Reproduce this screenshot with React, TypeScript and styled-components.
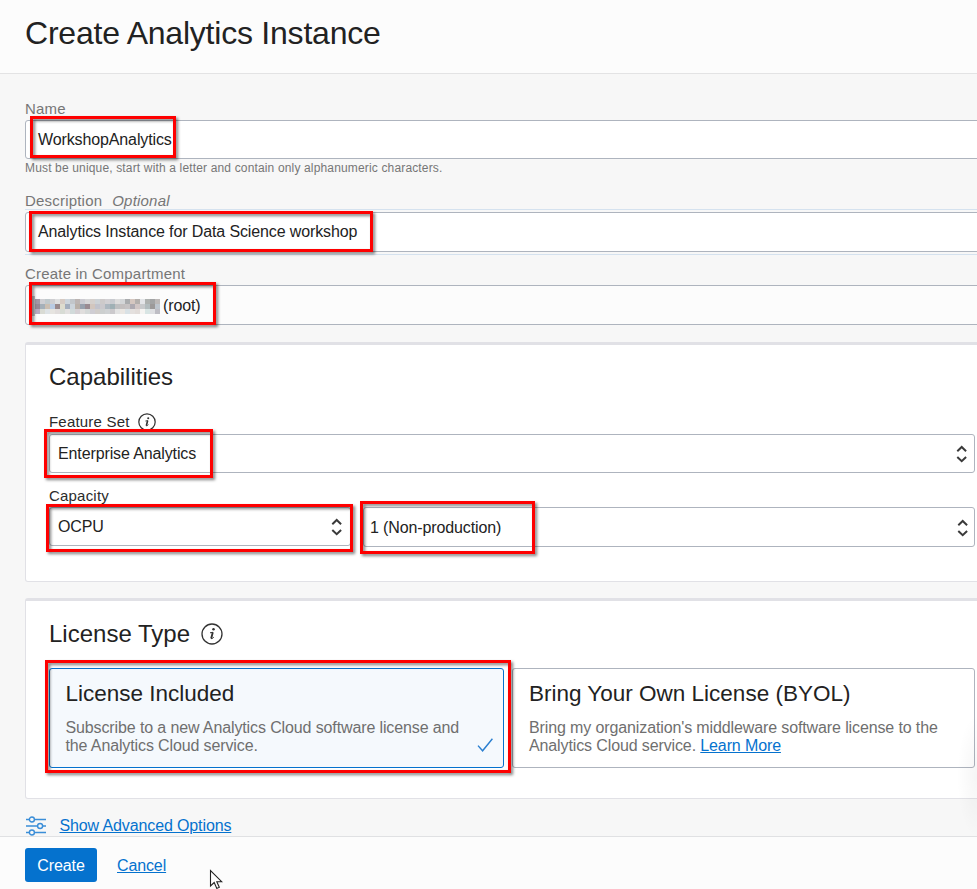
import React from "react";
import styled, { createGlobalStyle, css } from "styled-components";

const GlobalStyle = createGlobalStyle`
  *, *::before, *::after { box-sizing: border-box; }
  html, body { margin: 0; padding: 0; overflow: hidden; }
  body { font-family: "Liberation Sans", Arial, sans-serif; color: #222; }
`;

const Page = styled.div`
  position: relative;
  display: flex;
  flex-direction: column;
  width: 977px;
  height: 889px;
  overflow: hidden;
  background: #f7f7f7;
`;

const Header = styled.header`
  flex: none;
  height: 74px;
  padding: 13px 25px 0;
  background: #fcfcfc;
  border-bottom: 1px solid #e3e3e4;
`;

const Title = styled.h1`
  margin: 0;
  font-size: 32px;
  font-weight: 400;
  line-height: 40px;
  letter-spacing: -0.22px;
  white-space: nowrap;
`;

const Main = styled.main`
  flex: 1;
  min-height: 0;
  display: flex;
  flex-direction: column;
  padding: 24px 0 0 25px;
  overflow: hidden;
`;

const Field = styled.div<{ $gap?: number }>`
  flex: none;
  margin-bottom: ${(p) => p.$gap ?? 0}px;
`;

const Label = styled.div<{ $dark?: boolean; $height?: number; $nudge?: number }>`
  display: flex;
  align-items: center;
  height: ${(p) => p.$height ?? 22}px;
  padding-top: ${(p) => Math.max(p.$nudge ?? 0, 0)}px;
  padding-bottom: ${(p) => Math.max(-(p.$nudge ?? 0), 0)}px;
  font-size: 15px;
  line-height: 22px;
  letter-spacing: 0.2px;
  white-space: nowrap;
  color: ${(p) => (p.$dark ? "#2b2b2b" : "#767676")};
`;

const Optional = styled.em`
  margin-left: 10px;
`;

const TextBox = styled.div<{ $height: number; $muted?: boolean }>`
  position: relative;
  display: flex;
  align-items: center;
  width: 980px;
  height: ${(p) => p.$height}px;
  padding-left: 12px;
  border: 1px solid #aeb4be;
  border-radius: 3px;
  background: ${(p) => (p.$muted ? "#fcfcfc" : "#fff")};
`;

const FocusHalo = styled.div`
  width: 980px;
  padding: 2px 0;
  border: solid #d5e2ef;
  border-width: 1px 0;
`;

const Value = styled.span<{ $top?: number }>`
  padding-top: ${(p) => p.$top ?? 0}px;
  font-size: 16px;
  line-height: 20px;
  letter-spacing: -0.12px;
  white-space: nowrap;
`;

const Hint = styled.div`
  height: 18px;
  font-size: 12px;
  line-height: 18px;
  letter-spacing: 0.155px;
  white-space: nowrap;
  color: #767676;
`;

const Highlight = styled.div<{ $x: number; $y: number; $w: number; $h: number }>`
  position: absolute;
  z-index: 2;
  left: ${(p) => p.$x}px;
  top: ${(p) => p.$y}px;
  width: ${(p) => p.$w}px;
  height: ${(p) => p.$h}px;
  border: 3px solid #fe0000;
  filter: drop-shadow(2px 2px 1.5px rgba(0, 0, 0, 0.5));
  pointer-events: none;
`;

const Mosaic = styled.svg`
  flex: none;
  margin-left: -6px;
  margin-right: 3px;
`;

const Card = styled.section<{ $height: number }>`
  flex: none;
  width: 980px;
  height: ${(p) => p.$height}px;
  padding-left: 23px;
  background: #fff;
  border: 1px solid #e1e1e6;
  border-top-width: 3px;
  border-radius: 3px;
  margin-bottom: 16px;
`;

const CardTitle = styled.h2<{ $top: number; $bottom: number }>`
  display: flex;
  align-items: center;
  gap: 11px;
  margin: ${(p) => p.$top}px 0 ${(p) => p.$bottom}px;
  height: 30px;
  font-size: 24px;
  font-weight: 400;
  line-height: 30px;
  white-space: nowrap;
`;

const Select = styled.div<{
  $width: number;
  $height: number;
  $left: number;
  $right: number;
  $top?: number;
}>`
  position: relative;
  flex: none;
  display: flex;
  align-items: center;
  justify-content: space-between;
  width: ${(p) => p.$width}px;
  height: ${(p) => p.$height}px;
  padding: ${(p) => p.$top ?? 0}px ${(p) => p.$right}px 0 ${(p) => p.$left}px;
  border: 1px solid #aeb4be;
  border-radius: 3px;
  background: #fff;
`;

const CapacityRow = styled.div`
  display: flex;
  align-items: flex-start;
  gap: 12px;
`;

const OptionRow = styled.div`
  display: flex;
  gap: 8px;
`;

const Option = styled.div<{ $width: number; $selected?: boolean }>`
  position: relative;
  flex: none;
  width: ${(p) => p.$width}px;
  height: 100px;
  padding: 11px 0 0 16px;
  border: 1px solid #aeb4be;
  border-radius: 3px;
  background: #fff;
  ${(p) =>
    p.$selected &&
    css`
      padding-left: 15.5px;
      border-color: #0572ce;
      background: #f5f9fd;
    `}
`;

const OptionTitle = styled.div`
  height: 28px;
  font-size: 22.5px;
  line-height: 28px;
  white-space: nowrap;
`;

const OptionBody = styled.div`
  margin-top: 11px;
`;

const OptionText = styled.div`
  height: 18px;
  font-size: 16px;
  line-height: 18px;
  letter-spacing: -0.12px;
  white-space: nowrap;
  color: #6f6f6f;
`;

const CheckSlot = styled.div`
  position: absolute;
  right: 9px;
  bottom: 14px;
  display: flex;
`;

const Link = styled.a`
  font-size: 16px;
  line-height: inherit;
  letter-spacing: -0.12px;
  color: #0572ce;
  text-decoration: underline;
  white-space: nowrap;
`;

const AdvancedRow = styled.div`
  flex: none;
  display: flex;
  align-items: flex-start;
  gap: 13.5px;
  height: 21px;
  padding-top: 1px;
  line-height: 20px;
`;

const Footer = styled.footer`
  flex: none;
  display: flex;
  align-items: flex-start;
  gap: 20px;
  height: 53px;
  padding: 11px 25px 0;
  background: #fcfcfc;
  border-top: 1px solid #e0e1e3;
`;

const CreateButton = styled.button`
  width: 72px;
  height: 34px;
  padding: 1px 0 0;
  border: 0;
  border-radius: 3px;
  background: #0572ce;
  color: #fff;
  font: 16px/33px "Liberation Sans", Arial, sans-serif;
  letter-spacing: -0.1px;
`;

const CancelSlot = styled.div`
  display: flex;
  align-items: center;
  height: 34px;
  padding-top: 2px;
  line-height: 20px;
`;

const Cursor = styled.svg`
  position: absolute;
  left: 209px;
  top: 869px;
`;

const EdgeShade = styled.div`
  position: absolute;
  right: 0;
  top: 716px;
  width: 20px;
  height: 120px;
  background: radial-gradient(ellipse 20px 62px at 100% 50%, rgba(0, 0, 0, 0.04), rgba(0, 0, 0, 0));
`;

const InfoIcon = ({ size }: { size: number }) => (
  <svg width={size} height={size} viewBox="0 0 22 22" fill="none">
    <circle cx="11" cy="11" r="10" stroke="#333" strokeWidth={size > 20 ? 1.3 : 1.5} />
    <circle cx="12.5" cy="6.3" r="1.25" fill="#333" />
    <path d="M9 9.8 L12 9.3" stroke="#333" strokeWidth="1" />
    <path d="M11.8 9.2 L10.2 15.6" stroke="#333" strokeWidth="1.9" />
    <path d="M10 15.7 Q11.4 15.9 12.8 14.2" stroke="#333" strokeWidth="1" />
  </svg>
);

const Chevrons = () => (
  <svg width="12" height="18" viewBox="0 0 12 18" fill="none" stroke="#3a3a3a" strokeWidth="2">
    <path d="M1.3 6.2 L5.7 2 L10.1 6.2" />
    <path d="M1.3 12 L5.7 16.2 L10.1 12" />
  </svg>
);

const CheckIcon = () => (
  <svg width="17" height="15" viewBox="0 0 17 15" fill="none" stroke="#2a7fd0" strokeWidth="1.4">
    <path d="M1 7.6 L5.6 12.8 L15.4 0.8" />
  </svg>
);

const SlidersIcon = () => (
  <svg width="21" height="20" viewBox="0 0 21 20" fill="none" stroke="#3b8ed8" strokeWidth="1.4">
    <path d="M1 3.5h3.2M9.6 3.5H21M1 10h11.4M17.8 10H21M1 16.5h3.2M9.6 16.5H21" />
    <circle cx="6.9" cy="3.5" r="2.5" />
    <circle cx="15.1" cy="10" r="2.5" />
    <circle cx="6.9" cy="16.5" r="2.5" />
  </svg>
);

const mosaicRows = [
  ["#a397a5", "#cfcfd3", "#c0c9cc", "#cfcfd2", "#dedfe0", "#d6cbc4", "#cdd5dc", "#c2c6ca", "#bcb5b3", "#cccbd1", "#d6d6d7", "#d5d0cd", "#cdd2d6", "#cdcaca", "#d2d0d3", "#c9cbd0", "#dcdcdc", "#d3d5d7", "#aaacae", "#d5c7c0", "#b4b0ad", "#e3e5e8", "#aeb2b0", "#a3a4a5", "#bdb9b8"],
  ["#978895", "#a5b0b9", "#cbbfb2", "#b9cbe3", "#99898c", "#dedcce", "#a4aebd", "#ccd4db", "#b9b0a8", "#98a1ad", "#9a8b91", "#d2c6be", "#c2c3cc", "#cac8cc", "#adb7bf", "#9fb0b5", "#bebfc1", "#c3bfbf", "#c6c2c3", "#aeaab1", "#d1c6c5", "#c8cacc", "#b2bcbe", "#9c9999", "#bec5cd"],
  ["#b9abc1", "#d9dbd4", "#dee3e6", "#e6e4e0", "#e1dddc", "#d8dcd5", "#e3e1e0", "#d1dada", "#d5d0d4", "#e0dedd", "#d5d9d8", "#cfcdd3", "#d1cdca", "#cccfcf", "#cfd2d4", "#cbc9cc", "#e3e3e3", "#eae6e2", "#d9e1e5", "#e4e0de", "#e2dcd9", "#f5f4f2", "#d8e5e4", "#dedfe2", "#bebdc4"],
];

const RedactedName = () => (
  <Mosaic width="128" height="24" viewBox="0 0 128 24" shapeRendering="crispEdges">
    <rect x="0" y="3" width="3" height="20" fill="#c3c1c2" />
    {mosaicRows.map((row, y) =>
      row.map((fill, x) => (
        <rect key={`${x}-${y}`} x={3 + x * 5} y={6 + y * 5} width="5" height="5" fill={fill} />
      ))
    )}
  </Mosaic>
);

export default function App() {
  return (
    <>
      <GlobalStyle />
      <Page>
        <Header>
          <Title>Create Analytics Instance</Title>
        </Header>
        <Main>
          <Field $gap={13}>
            <Label>Name</Label>
            <TextBox $height={39}>
              <Value>WorkshopAnalytics</Value>
              <Highlight $x={4} $y={-5} $w={146} $h={42} />
            </TextBox>
            <Hint>Must be unique, start with a letter and contain only alphanumeric characters.</Hint>
          </Field>
          <Field $gap={8}>
            <Label $height={19} $nudge={2}>
              Description <Optional>Optional</Optional>
            </Label>
            <FocusHalo>
              <TextBox $height={40}>
                <Value>Analytics Instance for Data Science workshop</Value>
                <Highlight $x={3} $y={-2} $w={344} $h={41} />
              </TextBox>
            </FocusHalo>
          </Field>
          <Field $gap={17}>
            <Label>Create in Compartment</Label>
            <TextBox $height={40} $muted>
              <RedactedName />
              <Value $top={2}>(root)</Value>
              <Highlight $x={3} $y={-4} $w={187} $h={43} />
            </TextBox>
          </Field>

          <Card $height={240}>
            <CardTitle $top={17} $bottom={20}>
              Capabilities
            </CardTitle>
            <Field $gap={13}>
              <Label $dark $nudge={-2}>
                Feature Set&nbsp;&nbsp;
                <InfoIcon size={18} />
              </Label>
              <Select $width={926} $height={39} $left={8} $right={6}>
                <Value>Enterprise Analytics</Value>
                <Chevrons />
                <Highlight $x={-6} $y={-6} $w={169} $h={49} />
              </Select>
            </Field>
            <Label $dark $height={21} $nudge={-1}>
              Capacity
            </Label>
            <CapacityRow>
              <Select $width={302} $height={39} $left={8} $right={7}>
                <Value>OCPU</Value>
                <Chevrons />
                <Highlight $x={-4} $y={-4} $w={307} $h={48} />
              </Select>
              <Select $width={612} $height={40} $left={6} $right={5} $top={2}>
                <Value>1 (Non-production)</Value>
                <Chevrons />
                <Highlight $x={-4} $y={-7} $w={175} $h={53} />
              </Select>
            </CapacityRow>
          </Card>

          <Card $height={201}>
            <CardTitle $top={18} $bottom={19}>
              License Type
              <InfoIcon size={22} />
            </CardTitle>
            <OptionRow>
              <Option $width={455} $selected>
                <OptionTitle>License Included</OptionTitle>
                <OptionBody>
                  <OptionText>Subscribe to a new Analytics Cloud software license and</OptionText>
                  <OptionText>the Analytics Cloud service.</OptionText>
                </OptionBody>
                <CheckSlot>
                  <CheckIcon />
                </CheckSlot>
                <Highlight $x={-5} $y={-9} $w={466} $h={113} />
              </Option>
              <Option $width={463}>
                <OptionTitle>Bring Your Own License (BYOL)</OptionTitle>
                <OptionBody>
                  <OptionText>Bring my organization's middleware software license to the</OptionText>
                  <OptionText>
                    Analytics Cloud service. <Link>Learn More</Link>
                  </OptionText>
                </OptionBody>
              </Option>
            </OptionRow>
          </Card>

          <AdvancedRow>
            <SlidersIcon />
            <Link>Show Advanced Options</Link>
          </AdvancedRow>
        </Main>
        <Footer>
          <CreateButton>Create</CreateButton>
          <CancelSlot>
            <Link>Cancel</Link>
          </CancelSlot>
        </Footer>
        <EdgeShade />
        <Cursor width="14" height="20" viewBox="0 0 14 20">
          <path
            d="M1.5 1.5 V17 L5.2 13.5 L7.8 19.4 L10.3 18.3 L7.8 12.7 H12.7 Z"
            fill="#fff"
            stroke="#222"
            strokeWidth="1.1"
          />
        </Cursor>
      </Page>
    </>
  );
}
